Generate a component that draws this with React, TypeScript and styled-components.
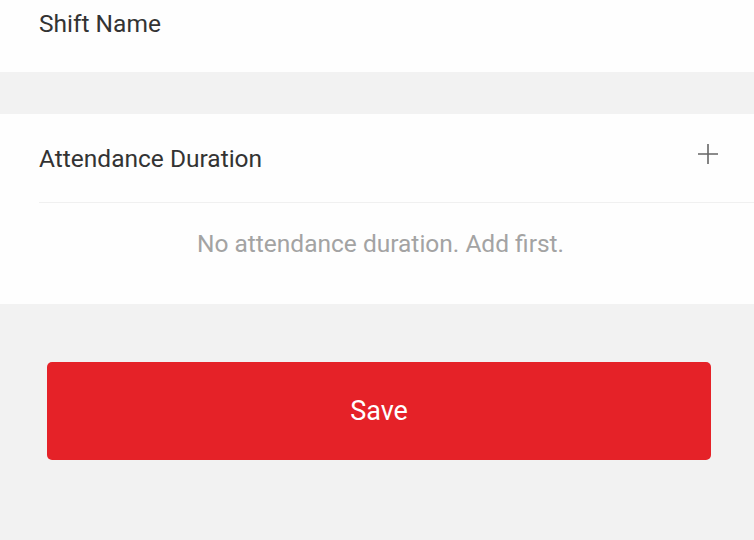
import React from "react";
import styled, { createGlobalStyle } from "styled-components";

const GlobalStyle = createGlobalStyle`
  html, body {
    margin: 0;
    padding: 0;
    background: #f2f2f2;
    font-family: Roboto, "Liberation Sans", sans-serif;
  }
`;

const Page = styled.div`
  width: 754px;
  height: 540px;
  background: #f2f2f2;
  display: flex;
  flex-direction: column;
`;

const Section = styled.div<{ $mt?: number }>`
  background: #fefefe;
  margin-top: ${props => props.$mt || 0}px;
  padding-left: 39px;
`;

const Row = styled.div<{ $h: number; $divider?: boolean }>`
  height: ${props => props.$h}px;
  display: flex;
  align-items: center;
  justify-content: space-between;
  padding-right: 35px;
  border-bottom: ${props => (props.$divider ? "1px solid #f0f0f0" : "none")};
`;

const Label = styled.div`
  font-size: 24.5px;
  color: #333;
`;

const Empty = styled.div`
  height: 101px;
  padding: 0 32px 20px 0;
  box-sizing: border-box;
  display: flex;
  align-items: center;
  justify-content: center;
  font-size: 24.5px;
  color: #a3a3a3;
`;

const Footer = styled.div`
  padding: 58px 43px 0 47px;
`;

const SaveButton = styled.button`
  width: 664px;
  height: 98px;
  border: none;
  border-radius: 5px;
  background: #e52228;
  color: #fff;
  font-family: Roboto, "Liberation Sans", sans-serif;
  font-size: 27px;
  cursor: pointer;
`;

const PlusWrap = styled.span`
  display: flex;
  margin-top: -8px;
`;

const PlusIcon = () => (
  <PlusWrap>
    <svg width="22" height="22" viewBox="0 0 22 22">
      <path d="M11 1v20M1 11h20" stroke="#666" strokeWidth="1.6" fill="none" />
    </svg>
  </PlusWrap>
);

export default function App() {
  return (
    <Page>
      <GlobalStyle />
      <Section>
        <Row $h={47}>
          <Label>Shift Name</Label>
        </Row>
        <div style={{ height: 25 }} />
      </Section>
      <Section $mt={42}>
        <Row $h={88} $divider>
          <Label>Attendance Duration</Label>
          <PlusIcon />
        </Row>
        <Empty>No attendance duration. Add first.</Empty>
      </Section>
      <Footer>
        <SaveButton>Save</SaveButton>
      </Footer>
    </Page>
  );
}
